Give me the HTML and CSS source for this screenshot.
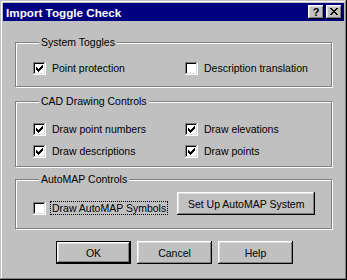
FILE: index.html
```html
<!DOCTYPE html>
<html lang="en">
<head>
  <meta charset="UTF-8" />
  <title>Import Toggle Check</title>
  <link rel="stylesheet" href="styles.css">
</head>
<body>
  <div class="window">
    <div class="titlebar">
      <span class="title">Import Toggle Check</span>
      <div class="caption-buttons">
        <button class="caption-btn help-btn">?</button>
        <button class="caption-btn close-btn">
          <svg width="8" height="7" viewBox="0 0 8 7" shape-rendering="crispEdges"><path d="M0 0h2v1H0zM6 0h2v1H6zM1 1h2v1H1zM5 1h2v1H5zM2 2h4v1H2zM3 3h2v1H3zM2 4h4v1H2zM1 5h2v1H1zM5 5h2v1H5zM0 6h2v1H0zM6 6h2v1H6z"/></svg>
        </button>
      </div>
    </div>

    <div class="client">
      <!-- System Toggles -->
      <div class="group group-system">
        <div class="group-label">System Toggles</div>
        <div class="options">
          <div class="option">
            <span class="box"><svg width="7" height="7" viewBox="0 0 7 7" shape-rendering="crispEdges"><path d="M6 0h1v1H6zM5 1h2v1H5zM0 2h1v1H0zM4 2h3v1H4zM0 3h2v1H0zM3 3h3v1H3zM0 4h5v1H0zM1 5h3v1H1zM2 6h1v1H2z"/></svg></span>
            <span class="text">Point protection</span>
          </div>
          <div class="option">
            <span class="box"></span>
            <span class="text">Description translation</span>
          </div>
        </div>
      </div>

      <!-- CAD Drawing Controls -->
      <div class="group group-cad">
        <div class="group-label">CAD Drawing Controls</div>
        <div class="options">
          <div class="option">
            <span class="box"><svg width="7" height="7" viewBox="0 0 7 7" shape-rendering="crispEdges"><path d="M6 0h1v1H6zM5 1h2v1H5zM0 2h1v1H0zM4 2h3v1H4zM0 3h2v1H0zM3 3h3v1H3zM0 4h5v1H0zM1 5h3v1H1zM2 6h1v1H2z"/></svg></span>
            <span class="text">Draw point numbers</span>
          </div>
          <div class="option">
            <span class="box"><svg width="7" height="7" viewBox="0 0 7 7" shape-rendering="crispEdges"><path d="M6 0h1v1H6zM5 1h2v1H5zM0 2h1v1H0zM4 2h3v1H4zM0 3h2v1H0zM3 3h3v1H3zM0 4h5v1H0zM1 5h3v1H1zM2 6h1v1H2z"/></svg></span>
            <span class="text">Draw elevations</span>
          </div>
          <div class="option">
            <span class="box"><svg width="7" height="7" viewBox="0 0 7 7" shape-rendering="crispEdges"><path d="M6 0h1v1H6zM5 1h2v1H5zM0 2h1v1H0zM4 2h3v1H4zM0 3h2v1H0zM3 3h3v1H3zM0 4h5v1H0zM1 5h3v1H1zM2 6h1v1H2z"/></svg></span>
            <span class="text">Draw descriptions</span>
          </div>
          <div class="option">
            <span class="box"><svg width="7" height="7" viewBox="0 0 7 7" shape-rendering="crispEdges"><path d="M6 0h1v1H6zM5 1h2v1H5zM0 2h1v1H0zM4 2h3v1H4zM0 3h2v1H0zM3 3h3v1H3zM0 4h5v1H0zM1 5h3v1H1zM2 6h1v1H2z"/></svg></span>
            <span class="text">Draw points</span>
          </div>
        </div>
      </div>

      <!-- AutoMAP Controls -->
      <div class="group group-automap">
        <div class="group-label">AutoMAP Controls</div>
        <div class="automap-row">
          <div class="option">
            <span class="box"></span>
            <span class="text focused">Draw AutoMAP Symbols</span>
          </div>
          <button class="btn setup-btn">Set Up AutoMAP System</button>
        </div>
      </div>

      <div class="actions">
        <button class="btn default">OK</button>
        <button class="btn">Cancel</button>
        <button class="btn">Help</button>
      </div>
    </div>
  </div>
</body>
</html>
```

FILE: styles.css
```css
body {
  margin: 0;
  font-family: "Liberation Sans", Arial, sans-serif;
  font-size: 10.5px;
  color: #000;
  background: #c0c0c0;
}

.window {
  width: 347px;
  height: 280px;
  box-sizing: border-box;
  padding: 3px;
  background: #c0c0c0;
  box-shadow: inset -1px -1px #000, inset 1px 1px #c0c0c0,
              inset -2px -2px #808080, inset 2px 2px #fff;
}

.titlebar {
  height: 18px;
  background: #000080;
  color: #fff;
  display: flex;
  align-items: center;
  padding: 0 2px 0 3px;
}

.title {
  font-weight: bold;
  font-size: 11.7px;
}

.caption-buttons {
  margin-left: auto;
  display: flex;
  gap: 2px;
}

.caption-btn {
  width: 16px;
  height: 14px;
  padding: 0;
  border: 0;
  background: #c0c0c0;
  color: #000;
  box-shadow: inset -1px -1px #000, inset 1px 1px #fff,
              inset -2px -2px #808080, inset 2px 2px #dfdfdf;
  display: flex;
  justify-content: center;
}

.help-btn {
  align-items: center;
  font: bold 11px "Liberation Sans", Arial, sans-serif;
  line-height: 12px;
}

.close-btn {
  align-items: flex-start;
  padding-top: 3px;
}

.client {
  padding: 21px 12px 0 12px;
}

/* etched group frame */
.group {
  border: 1px solid #808080;
  box-shadow: inset 1px 1px #fff, 1px 1px #fff;
}

.group-label {
  width: fit-content;
  margin: -7px 0 0 6px;
  padding: 0 2px;
  background: #c0c0c0;
  line-height: 13px;
}

.group-system {
  padding: 0 0 11px 17px;
}

.group-system .options {
  margin-top: 13px;
}

.group-cad {
  margin-top: 14px;
  padding: 0 0 8px 17px;
}

.group-cad .options {
  margin-top: 15px;
}

.group-automap {
  margin-top: 12px;
  padding: 0 0 13px 17px;
}

.options {
  display: grid;
  grid-template-columns: 152px auto;
  row-gap: 9px;
}

.option {
  display: flex;
  align-items: flex-start;
  gap: 5px;
}

.box {
  width: 13px;
  height: 13px;
  flex: none;
  box-sizing: border-box;
  background: #fff;
  box-shadow: inset -1px -1px #fff, inset 1px 1px #808080,
              inset -2px -2px #dfdfdf, inset 2px 2px #000;
  display: flex;
  align-items: center;
  justify-content: center;
}

.text {
  line-height: 12px;
  padding: 0 1px;
  white-space: nowrap;
}

.focused {
  outline: 1px dotted #000;
}

.automap-row {
  display: flex;
  align-items: flex-end;
  margin-top: 6px;
}

.btn {
  height: 23px;
  padding: 0;
  border: 0;
  background: #c0c0c0;
  color: #000;
  font-family: inherit;
  font-size: 10.5px;
  box-shadow: inset -1px -1px #000, inset 1px 1px #fff,
              inset -2px -2px #808080, inset 2px 2px #dfdfdf;
}

.setup-btn {
  width: 138px;
  margin-left: 10px;
}

.actions {
  display: flex;
  gap: 6px;
  margin-top: 12px;
  padding-left: 41px;
}

.actions .btn {
  width: 75px;
}

.btn.default {
  box-shadow: inset 0 0 0 1px #000, inset -2px -2px #000, inset 2px 2px #fff,
              inset -3px -3px #808080, inset 3px 3px #dfdfdf;
}
```
